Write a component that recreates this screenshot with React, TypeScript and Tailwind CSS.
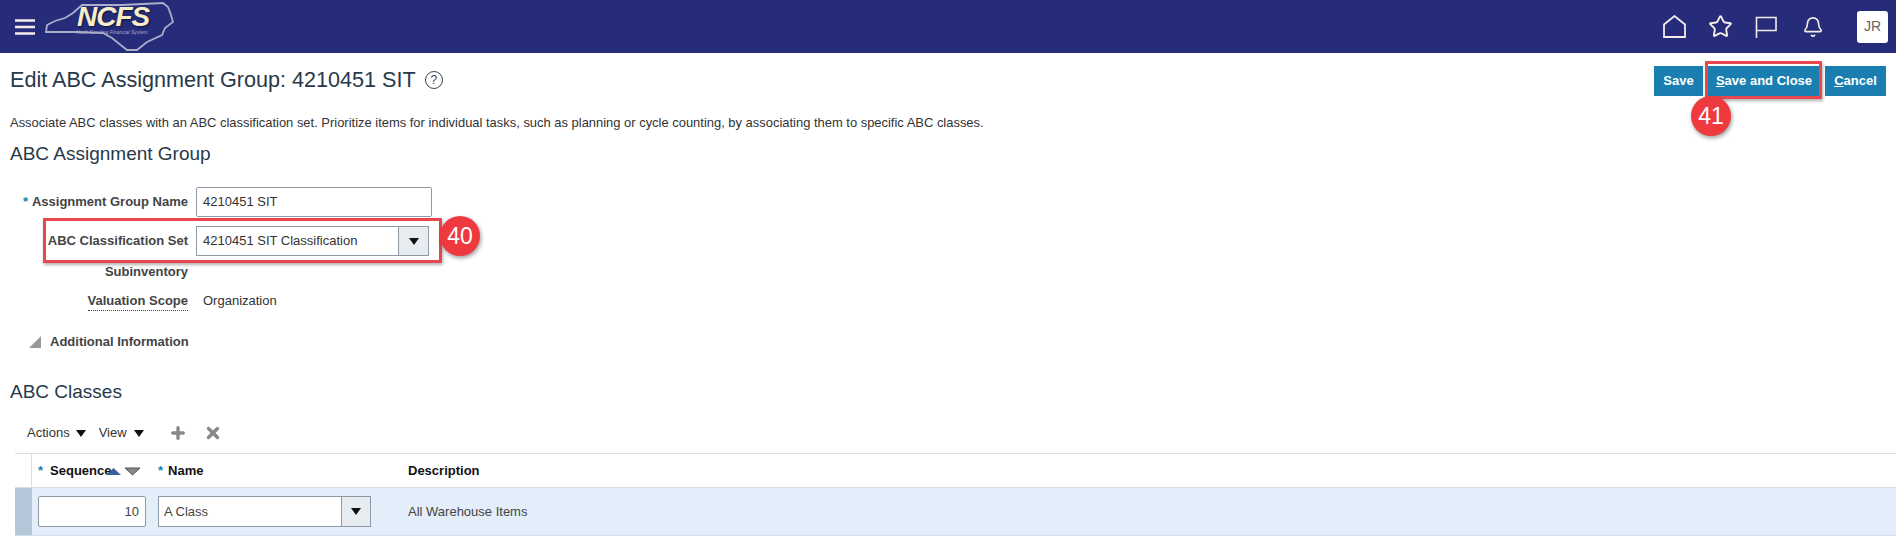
import { Star, Bell, Plus, X } from 'lucide-react';

function Caret({ className }: { className?: string }) {
  return (
    <svg width="10" height="7" viewBox="0 0 10 7" className={className}>
      <path d="M0 0H10L5 7Z" fill="#111" />
    </svg>
  );
}

function Logo() {
  return (
    <div className="relative h-[53px] w-[130px]">
      <svg width="130" height="53" viewBox="0 0 130 53" className="absolute left-0 top-0">
        <path
          d="M3 25 L11 21 L21 18 L29 13 L38 5 L78 5 L119 3 L124 7 L127 15 L129 22 L121 28 L118 35 L103 42 L93 50 L83 50 L68 38 L59 33 L33 32 L2 32 Z"
          fill="#262c7a"
          stroke="#a9aec9"
          strokeWidth="1.8"
        />
      </svg>
      <span className="absolute left-[33px] top-[5px] text-[28px] leading-[24px] font-bold italic tracking-[-1px] text-[#f7edc9] [text-shadow:1px_1px_2px_#10143f]">
        NCFS
      </span>
      <span className="absolute left-[32px] top-[29px] text-[5px] leading-[7px] italic whitespace-nowrap text-[#a4a8c8]">
        North Carolina Financial System
      </span>
    </div>
  );
}

function Callout({ value }: { value: string }) {
  return (
    <div className="flex h-10 w-10 items-center justify-center rounded-full bg-[#ee3a3f] text-[23px] font-normal text-white shadow-[1px_2px_4px_rgba(0,0,0,0.4)]">
      {value}
    </div>
  );
}

export default function App() {
  return (
    <div className="relative h-[556px] w-[1896px] overflow-hidden bg-white font-['Liberation_Sans',Arial,sans-serif] text-[13px] text-[#333]">
      {/* Top bar */}
      <header className="flex h-[53px] items-center justify-between bg-[#262c7a] pl-[15px] pr-[8px]">
        <div className="flex items-center gap-[9px]">
          <svg width="20" height="16" viewBox="0 0 20 16">
            <path d="M0 1.5H20M0 8H20M0 14.5H20" stroke="#f3ecea" strokeWidth="2.4" />
          </svg>
          <Logo />
        </div>
        <div className="flex items-center text-[#f3ecea]">
          <svg width="23" height="23" viewBox="0 0 23 23" fill="none" stroke="currentColor" strokeWidth="1.8">
            <path d="M1 9.5L11.5 1L22 9.5V22H1Z" />
          </svg>
          <Star className="ml-[22px] h-[25px] w-[25px]" strokeWidth={1.8} />
          <svg className="ml-[22px]" width="22" height="22" viewBox="0 0 22 22" fill="none" stroke="currentColor" strokeWidth="1.6">
            <path d="M1.5 22V1.5H21V14.5H1.5" />
          </svg>
          <Bell className="ml-[25px] h-[22px] w-[22px]" strokeWidth={1.8} />
          <div className="ml-[33px] flex h-[32px] w-[31px] items-center justify-center rounded-[3px] bg-white text-[14px] text-[#666]">
            JR
          </div>
        </div>
      </header>

      {/* Page title */}
      <div className="flex h-[55px] items-start justify-between pl-[10px] pr-[10px]">
        <div className="flex items-center pt-[13px]">
          <h1 className="text-[21.6px] leading-[28px] text-[#27394a]">Edit ABC Assignment Group: 4210451 SIT</h1>
          <span className="ml-[9px] flex h-[18px] w-[18px] items-center justify-center rounded-full border border-[#444] text-[12px] text-[#444]">
            ?
          </span>
        </div>
        <div className="relative mt-[13px] flex gap-[5px] font-bold text-white">
          <button className="flex h-[30px] w-[49px] items-center justify-center bg-[#1a7fb0]">Save</button>
          <button className="flex h-[30px] w-[112px] items-center justify-center bg-[#1a7fb0]">
            <span><u>S</u>ave and Close</span>
          </button>
          <button className="flex h-[30px] w-[61px] items-center justify-center bg-[#1a7fb0]">
            <span><u>C</u>ancel</span>
          </button>
          <div className="absolute left-[51px] top-[-5px] h-[38px] w-[117px] border-[3px] border-[#e9474d] shadow-[1px_2px_3px_rgba(0,0,0,0.3)]" />
          <div className="absolute left-[37px] top-[30px]">
            <Callout value="41" />
          </div>
        </div>
      </div>

      <p className="mt-[7px] pl-[10px] text-[12.95px] leading-[16px]">
        Associate ABC classes with an ABC classification set. Prioritize items for individual tasks, such as planning or
        cycle counting, by associating them to specific ABC classes.
      </p>

      <h2 className="mt-[10px] pl-[10px] text-[19px] leading-[26px] text-[#27394a]">ABC Assignment Group</h2>

      {/* Form */}
      <div className="relative mt-[20px] grid grid-cols-[188px_1fr] gap-x-[8px]">
        <label className="flex h-[30px] items-center justify-end font-bold text-[#444]">
          <span className="mr-[4px] text-[#1a7fb0]">*</span>
          Assignment Group Name
        </label>
        <div className="flex h-[30px] w-[236px] items-center rounded-[2px] border border-[#8e9aa6] pl-[6px]">4210451 SIT</div>

        <label className="mt-[9px] flex h-[30px] items-center justify-end font-bold text-[#444]">ABC Classification Set</label>
        <div className="mt-[9px] flex h-[30px] w-[233px] items-center border border-[#8e9aa6]">
          <span className="flex-1 pl-[6px]">4210451 SIT Classification</span>
          <span className="flex h-full w-[30px] items-center justify-center border-l border-[#8e9aa6] bg-[#e6ecf0]">
            <Caret />
          </span>
        </div>

        <label className="mt-[6px] flex h-[20px] items-center justify-end font-bold text-[#444]">Subinventory</label>
        <div />

        <label className="mt-[9px] flex h-[20px] items-center justify-end font-bold text-[#444]">
          <span className="border-b border-dotted border-[#444]">Valuation Scope</span>
        </label>
        <div className="mt-[9px] flex h-[20px] items-center pl-[7px]">Organization</div>

        {/* Callout 40 */}
        <div className="absolute left-[43px] top-[31px] h-[45px] w-[399px] border-[3px] border-[#e9474d] shadow-[1px_2px_3px_rgba(0,0,0,0.3)]" />
        <div className="absolute left-[440px] top-[29px]">
          <Callout value="40" />
        </div>
      </div>

      <div className="mt-[23px] flex h-[16px] items-center pl-[29px] font-bold text-[#444]">
        <svg width="12" height="12" viewBox="0 0 12 12">
          <path d="M12 0V12H0Z" fill="#999" />
        </svg>
        <span className="ml-[9px]">Additional Information</span>
      </div>

      <h2 className="mt-[29px] pl-[10px] text-[19px] leading-[26px] text-[#27394a]">ABC Classes</h2>

      {/* Table toolbar */}
      <div className="mt-[13px] flex h-[30px] items-center pl-[27px]">
        <span>Actions</span>
        <Caret className="ml-[6px]" />
        <span className="ml-[13px]">View</span>
        <Caret className="ml-[7px]" />
        <Plus className="ml-[25px] h-[18px] w-[18px] text-[#888]" strokeWidth={4.5} />
        <X className="ml-[17px] h-[18px] w-[18px] text-[#888]" strokeWidth={4.5} />
      </div>

      {/* Table */}
      <div className="ml-[15px] mt-[5px] border-t border-[#ddd]">
        <div className="flex h-[33px] items-center font-bold text-[#111]">
          <div className="h-full w-[17px] border-r border-[#ddd]" />
          <div className="flex w-[120px] items-center pl-[6px]">
            <span className="text-[#1a7fb0]">*</span>
            <span className="ml-[7px]">Sequence</span>
            <svg width="34" height="10" viewBox="0 0 34 10" className="ml-[-5px] shrink-0">
              <path d="M0 9L7.5 2L15 9Z" fill="#3c5f9e" />
              <path d="M19 2H34L26.5 9Z" fill="#888" stroke="#555" />
            </svg>
          </div>
          <div className="flex w-[250px] items-center pl-[6px]">
            <span className="text-[#1a7fb0]">*</span>
            <span className="ml-[5px]">Name</span>
          </div>
          <div className="pl-[6px]">Description</div>
        </div>
        <div className="flex h-[49px] items-center border-y border-[#d5dfe8] bg-[#e3eefa] text-[#444]">
          <div className="h-full w-[17px] bg-[#b4c7d9]" />
          <div className="w-[120px] pl-[6px]">
            <div className="flex h-[31px] w-[108px] items-center justify-end rounded-[2px] border border-[#8e9aa6] bg-white pr-[6px]">10</div>
          </div>
          <div className="w-[250px] pl-[6px]">
            <div className="flex h-[31px] w-[213px] items-center border border-[#8e9aa6]">
              <span className="flex h-full flex-1 items-center bg-white pl-[5px]">A Class</span>
              <span className="flex h-full w-[29px] items-center justify-center border-l border-[#8e9aa6] bg-[#e6ecf0]">
                <Caret />
              </span>
            </div>
          </div>
          <div className="pl-[6px]">All Warehouse Items</div>
        </div>
      </div>
    </div>
  );
}
